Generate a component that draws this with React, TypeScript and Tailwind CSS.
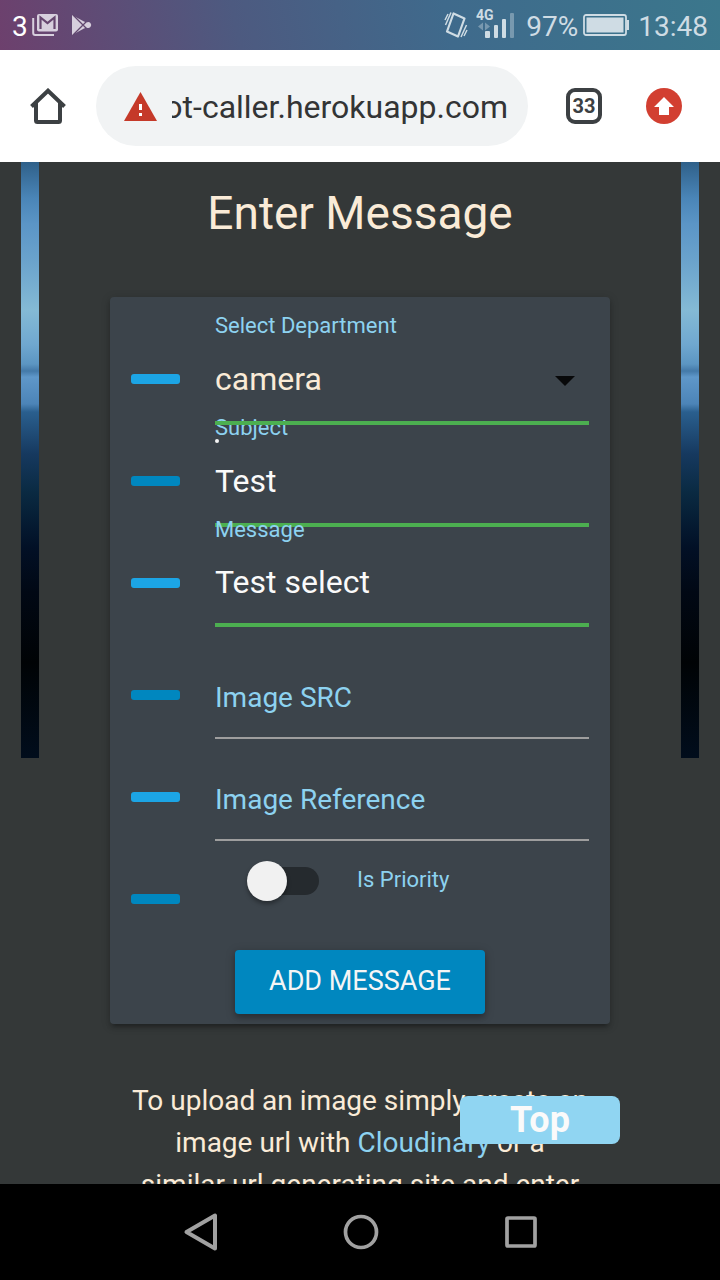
import { useState } from "react";
import type { ReactNode } from "react";

function StatusBar() {
  return (
    <header className="flex h-[50px] shrink-0 items-center bg-[linear-gradient(78deg,#6d406d_0%,#4d5a80_33%,#3f6a8c_62%,#3b778c_100%)] pr-3 pl-3 text-[28px] text-[#cfdce4]">
      <span className="pt-[3px] text-white">3</span>
      <svg className="ml-1 h-[24px] w-[28px]" viewBox="0 0 28 24" fill="none" aria-hidden="true">
        <path d="M1.200 5v15a2 2 0 0 0 2 2H22" stroke="#d7cfdd" strokeWidth="2" />
        <rect x="5" y="1" width="21" height="17.500" rx="2" fill="#d7cfdd" />
        <path d="M8.500 16V4.500L15.500 10l7-5.500V16" stroke="#66466f" strokeWidth="2.200" />
      </svg>
      <svg className="ml-3 h-[22px] w-[22px]" viewBox="0 0 22 22" aria-hidden="true">
        <path d="M0 1l12 6.500 2.500 1a3 3 0 1 1 0 5L12 14.500 0 21z" fill="#d7cfdd" />
        <path d="M1 1l13 13M1 21L14 8" stroke="#62486f" strokeWidth="1.300" />
      </svg>
      <svg className="ml-auto h-[28px] w-[24px]" viewBox="0 0 24 28" fill="none" stroke="#cfdce4" aria-hidden="true">
        <path d="M9.500 2.500L20.500 7.500 14 25.500 3 20.500z" strokeWidth="2.200" strokeLinejoin="round" />
        <path d="M1 9l3-6M1.500 14L7 1.500M17 26l5.500-12M20 25l3-6" strokeWidth="1.500" />
      </svg>
      <svg className="ml-2 h-[36px] w-[40px]" viewBox="0 0 40 36" aria-hidden="true">
        <text x="0" y="13" fontFamily="Roboto, sans-serif" fontWeight="700" fontSize="14" fill="#cfdce4">4G</text>
        <path d="M7 15.500v8L2 19.500zM9 15.500v8l5-4z" fill="#cfdce4" opacity=".4" />
        <g fill="#cfdce4">
          <rect x="9" y="24" width="5" height="7" rx="1" />
          <rect x="18" y="18" width="4" height="13" rx="1" />
          <rect x="26" y="12" width="4" height="19" rx="1" />
          <rect x="34" y="6" width="4" height="25" rx="1" opacity=".4" />
        </g>
      </svg>
      <span className="ml-[10px] pt-[3px]">97%</span>
      <svg className="ml-[5px] h-[22px] w-[46px]" viewBox="0 0 46 22" aria-hidden="true">
        <rect x="1" y="1" width="42" height="20" rx="2" fill="none" stroke="#cfdce4" strokeWidth="1.800" />
        <rect x="3.500" y="3.500" width="37" height="15" fill="#cfdce4" />
        <path d="M43.500 6H46v10h-2.500z" fill="#cfdce4" />
      </svg>
      <span className="ml-[9px] pt-[3px]">13:48</span>
    </header>
  );
}

function Toolbar() {
  return (
    <div className="flex h-28 shrink-0 items-center bg-white pr-[38px] pl-[30px]">
      <button type="button" aria-label="Home">
        <svg className="block size-9" viewBox="0 0 36 36" fill="none" stroke="#3c4043" strokeWidth="4" aria-hidden="true">
          <path d="M1.500 18.500L18 2.700l16.500 15.800M6 15v17.500a1.500 1.500 0 0 0 1.500 1.500h21a1.500 1.500 0 0 0 1.500-1.500V15" />
        </svg>
      </button>
      <div className="ml-[30px] flex h-20 min-w-0 flex-1 items-center rounded-full bg-[#f1f3f4] pr-5 pl-7">
        <svg className="h-[29px] w-[33px] shrink-0" viewBox="0 0 33 29" aria-hidden="true">
          <path d="M16.500 0L33 29H0z" fill="#c53929" />
          <path d="M15 12h3v6h-3zM15 21h3v3h-3z" fill="#fff" />
        </svg>
        <input
          aria-label="Address"
          dir="rtl"
          defaultValue="bot-caller.herokuapp.com"
          className="ml-[15px] h-12 min-w-0 flex-1 bg-transparent pt-px text-[32px] text-[#333435] outline-none"
        />
      </div>
      <button
        type="button"
        aria-label="33 open tabs"
        className="ml-[38px] flex size-9 items-center justify-center rounded-[9px] border-4 border-[#3c4043] text-xl font-bold text-[#3c4043]"
      >
        33
      </button>
      <button type="button" aria-label="Update available" className="ml-11">
        <svg className="block size-9" viewBox="0 0 36 36" aria-hidden="true">
          <circle cx="18" cy="18" r="18" fill="#d23f31" />
          <path d="M18 9l10 10h-5v8H13v-8H8z" fill="#fff" />
        </svg>
      </button>
    </div>
  );
}

function Row({ bar, children }: { bar: string; children: ReactNode }) {
  return (
    <div className="grid h-[102px] grid-cols-[49px_1fr] gap-[35px]">
      <span className={`h-[10px] self-center rounded-[3px] ${bar}`} />
      <div className="relative">{children}</div>
    </div>
  );
}

const bright = "bg-[#1ca5e5]";
const deep = "bg-[#0087bf]";
const floating = "absolute -top-[18px] left-0 text-[22px] leading-8 text-[#8dd2f0]";
const resting = "pointer-events-none absolute top-[34px] left-0 text-[28px] leading-10 text-[#8dd2f0]";
const field = "block w-full border-b-2 bg-transparent outline-none";
const valid = "border-[#4caf50] shadow-[0_2px_0_0_#4caf50]";

function MessageForm() {
  const [priority, setPriority] = useState(false);
  return (
    <form
      className="mx-[71px] rounded-[4px] bg-[#3c444b] px-[21px] pt-[31px] pb-[10px] shadow-[0_4px_4px_0_rgba(0,0,0,0.14),0_6px_2px_-4px_rgba(0,0,0,0.12),0_2px_10px_0_rgba(0,0,0,0.2)]"
      onSubmit={(e) => e.preventDefault()}
    >
      <Row bar={bright}>
        <label htmlFor="department" className={floating}>Select Department</label>
        <div className="relative z-10 pt-[9px]">
          <select id="department" defaultValue="camera" className={`${field} ${valid} h-[86px] appearance-none text-[32px] text-[#faebd7]`}>
            <option>camera</option>
            <option>sound</option>
          </select>
          <svg className="pointer-events-none absolute top-12 right-[14px] h-[10px] w-5" viewBox="0 0 20 10" aria-hidden="true">
            <path d="M0 0h20L10 10z" fill="#08090a" />
          </svg>
        </div>
      </Row>
      <Row bar={deep}>
        <label htmlFor="subject" className={floating}>Subject</label>
        <span className="absolute top-[9px] left-0 size-1 rounded-full bg-[#f5f5f5]" />
        <div className="pt-[9px]">
          <input id="subject" defaultValue="Test" className={`${field} ${valid} h-[86px] text-[32px] text-[#fafafa]`} />
        </div>
      </Row>
      <Row bar={bright}>
        <label htmlFor="message" className={floating}>Message</label>
        <div className="pt-[9px]">
          <textarea
            id="message"
            rows={1}
            defaultValue="Test select"
            className={`${field} ${valid} h-[84px] resize-none overflow-hidden pt-5 text-[32px] leading-[42px] text-[#fafafa]`}
          />
        </div>
      </Row>
      <div className="mt-[10px]">
        <Row bar={deep}>
          <label htmlFor="src" className={resting}>Image SRC</label>
          <div className="pt-[9px]">
            <input id="src" className={`${field} h-[86px] border-[#9e9e9e] text-[32px] text-[#fafafa]`} />
          </div>
        </Row>
      </div>
      <Row bar={bright}>
        <label htmlFor="reference" className={resting}>Image Reference</label>
        <div className="pt-[9px]">
          <input id="reference" className={`${field} h-[86px] border-[#9e9e9e] text-[32px] text-[#fafafa]`} />
        </div>
      </Row>
      <Row bar={deep}>
        <div className="flex items-center pt-[13px] pl-8">
          <input
            id="priority"
            type="checkbox"
            role="switch"
            checked={priority}
            onChange={(e) => setPriority(e.target.checked)}
            className="flex h-7 w-[72px] appearance-none items-center rounded-full bg-[#252a2e] before:size-10 before:shrink-0 before:rounded-full before:bg-[#f1f1f1] before:shadow-[0_3px_4px_rgba(0,0,0,0.35)] before:content-[''] checked:justify-end checked:bg-[#84c7c1]"
          />
          <label htmlFor="priority" className="ml-[38px] pb-[2px] text-[22px] leading-[38px] text-[#8dd2f0]">Is Priority</label>
        </div>
      </Row>
      <button
        type="submit"
        className="mx-auto block h-16 w-[250px] rounded-[4px] bg-[#0087bf] pb-[2px] text-[27px] text-[#f5f5f5] uppercase shadow-[0_4px_4px_0_rgba(0,0,0,0.14),0_2px_10px_0_rgba(0,0,0,0.25)]"
      >
        Add Message
      </button>
    </form>
  );
}

function NavBar() {
  return (
    <nav className="flex h-24 shrink-0 items-center justify-center bg-black">
      <button type="button" aria-label="Back" className="flex w-40 justify-center">
        <svg className="size-10" viewBox="0 0 40 40" fill="none" stroke="#a1a1a1" strokeWidth="4" strokeLinejoin="round" aria-hidden="true">
          <path d="M6.500 20L35 3.500v33z" />
        </svg>
      </button>
      <button type="button" aria-label="Home screen" className="flex w-40 justify-center">
        <svg className="size-10" viewBox="0 0 40 40" fill="none" stroke="#a1a1a1" strokeWidth="3.700" aria-hidden="true">
          <circle cx="21" cy="20" r="15.500" />
        </svg>
      </button>
      <button type="button" aria-label="Recent apps" className="flex w-40 justify-center">
        <svg className="size-10" viewBox="0 0 40 40" fill="none" stroke="#a1a1a1" strokeWidth="3.700" strokeLinejoin="round" aria-hidden="true">
          <rect x="7" y="6" width="28" height="28" rx="1" />
        </svg>
      </button>
    </nav>
  );
}

export default function App() {
  return (
    <div className="flex h-screen flex-col overflow-hidden bg-[#343838] font-['Roboto',sans-serif]">
      <StatusBar />
      <Toolbar />
      <main className="relative min-h-0 flex-1 overflow-hidden px-[21px]">
        <div className="bg-[linear-gradient(180deg,#2f6089_0px,#4a85b7_36px,#5b95c6_62px,#6ba3cc_100px,#84bad5_148px,#70a8d0_182px,#5c96c2_202px,#4479a8_209px,#5f97c9_215px,#4c84b7_242px,#2a5f8e_250px,#16395f_292px,#0a2a42_330px,#021026_385px,#010814_430px,#000305_500px,#010d1c_596px)] bg-[length:100%_596px] bg-no-repeat px-[18px]">
          <div className="bg-[#343838]">
            <h1 className="pt-[21px] pb-[54px] text-center text-[46px] leading-[60px] text-[#faebd7]">Enter Message</h1>
            <MessageForm />
            <p className="mx-[90px] mt-14 text-center text-[28px] leading-[42px] text-[#faebd7]">
              To upload an image simply create an image url with{" "}
              <a href="#cloudinary" className="text-[#8dd2f0]">Cloudinary</a> or a
              <br />
              similar url generating site and enter the link above.
            </p>
          </div>
        </div>
        <a
          href="#top"
          className="absolute right-[100px] bottom-10 flex h-12 w-40 items-center justify-center rounded-lg bg-[#90d5f2] text-4xl font-bold text-[#fafafa]"
        >
          Top
        </a>
      </main>
      <NavBar />
    </div>
  );
}
